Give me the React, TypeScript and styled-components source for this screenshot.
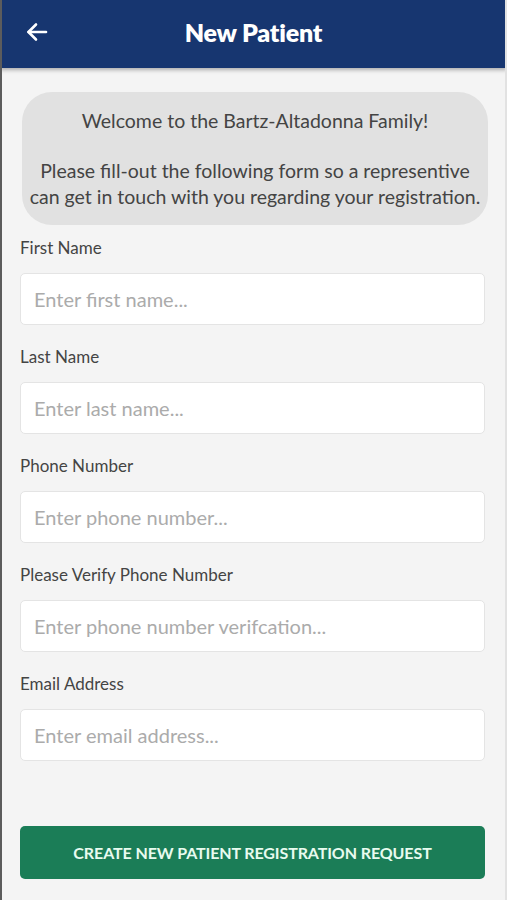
import React from "react";
import styled, { createGlobalStyle } from "styled-components";

const GlobalStyle = createGlobalStyle`
  html, body { margin: 0; padding: 0; background: #f4f4f4; }
  * { box-sizing: border-box; }
  body { font-family: Lato, "Noto Sans", sans-serif; }
`;

const Screen = styled.div`
  width: 507px;
  height: 900px;
  background: #f4f4f4;
  display: flex;
  flex-direction: column;
  overflow: hidden;
  border-left: 2px solid #5c5c5c;
  border-right: 2px solid #e2e2e2;
`;

const Header = styled.header`
  height: 68px;
  flex: none;
  background: #173670;
  display: grid;
  grid-template-columns: 70px 1fr 70px;
  align-items: center;
  box-shadow: 0 2px 4px rgba(0, 0, 0, 0.3);
  margin: 0 -2px;
  position: relative;
  z-index: 1;
`;

const BackButton = styled.button`
  background: none;
  border: none;
  padding: 0 0 0 25px;
  display: flex;
  align-items: center;
  height: 68px;
  margin-top: -4px;
`;

const Title = styled.h1`
  margin: 0 0 4px;
  text-align: center;
  color: #fff;
  font-size: 25px;
  font-weight: 800;
  letter-spacing: -0.2px;
`;

const Body = styled.main`
  flex: 1;
  padding: 24px 20px 0 18px;
  display: flex;
  flex-direction: column;
`;

const InfoBox = styled.div`
  margin: 0 -3px 12px 2px;
  background: #e1e1e1;
  border-radius: 30px;
  padding: 16px 2px 15px;
  text-align: center;
  color: #444;
  font-size: 19.5px;
  line-height: 26px;
`;

const Para = styled.p<{ $gap?: boolean }>`
  margin: ${(p) => (p.$gap ? "24px 0 0" : "0")};
`;

const Fields = styled.div`
  display: flex;
  flex-direction: column;
  gap: 21px;
`;

const Field = styled.div`
  display: flex;
  flex-direction: column;
`;

const Label = styled.label`
  font-size: 17px;
  color: #444;
  line-height: 22px;
  margin-bottom: 14px;
`;

const Input = styled.input`
  height: 52px;
  border: 1px solid #e4e4e4;
  border-radius: 5px;
  background: #fff;
  padding: 0 13px;
  font-family: Lato, "Noto Sans", sans-serif;
  font-size: 20px;
  color: #333;
  outline: none;
  &::placeholder { color: #ababab; }
`;

const SubmitButton = styled.button`
  margin-top: 65px;
  height: 53px;
  border: none;
  border-radius: 5px;
  background: #1b7d57;
  color: #e8fbef;
  font-family: Lato, "Noto Sans", sans-serif;
  font-size: 16px;
  font-weight: 700;
  letter-spacing: -0.1px;
`;

const fields = [
  { label: "First Name", placeholder: "Enter first name..." },
  { label: "Last Name", placeholder: "Enter last name..." },
  { label: "Phone Number", placeholder: "Enter phone number..." },
  { label: "Please Verify Phone Number", placeholder: "Enter phone number verifcation..." },
  { label: "Email Address", placeholder: "Enter email address..." },
];

export default function App() {
  return (
    <>
      <GlobalStyle />
      <Screen>
        <Header>
          <BackButton aria-label="Back">
            <svg width="24" height="24" viewBox="0 0 24 24" fill="none" stroke="#fff" strokeWidth="2.6" strokeLinecap="round" strokeLinejoin="round">
              <path d="M21 12H3.5" />
              <path d="M11 4.5L3.5 12l7.5 7.5" />
            </svg>
          </BackButton>
          <Title>New Patient</Title>
          <span />
        </Header>
        <Body>
          <InfoBox>
            <Para>Welcome to the Bartz-Altadonna Family!</Para>
            <Para $gap>
              Please fill-out the following form so a representive can get in touch with you regarding your registration.
            </Para>
          </InfoBox>
          <Fields>
            {fields.map((f) => (
              <Field key={f.label}>
                <Label>{f.label}</Label>
                <Input placeholder={f.placeholder} />
              </Field>
            ))}
          </Fields>
          <SubmitButton>CREATE NEW PATIENT REGISTRATION REQUEST</SubmitButton>
        </Body>
      </Screen>
    </>
  );
}
